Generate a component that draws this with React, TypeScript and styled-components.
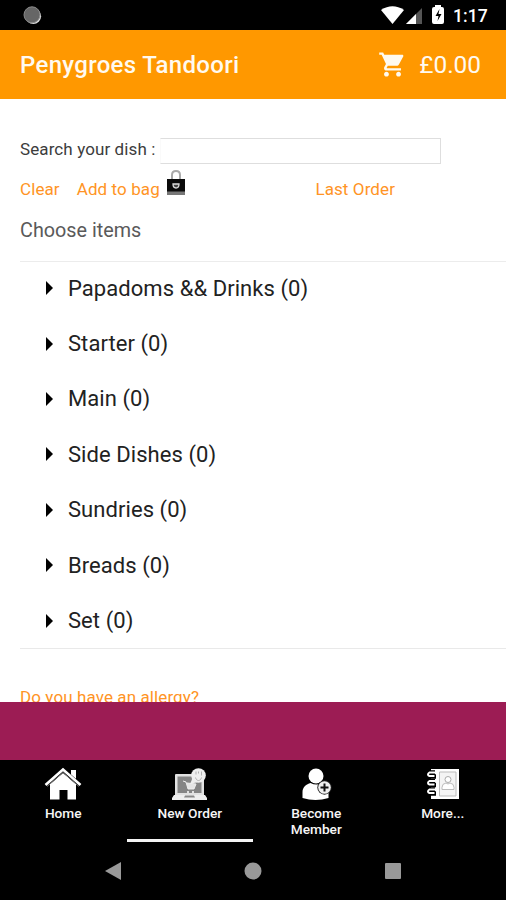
import React from "react";
import styled, { createGlobalStyle } from "styled-components";

const GlobalStyle = createGlobalStyle`
  * { box-sizing: border-box; }
  body { margin: 0; background: #000; font-family: Roboto, sans-serif; }
`;

const Screen = styled.div`
  width: 506px;
  height: 900px;
  display: flex;
  flex-direction: column;
  overflow: hidden;
  background: #fff;
`;

const StatusBar = styled.div`
  height: 30px;
  flex: none;
  display: flex;
  align-items: center;
  padding: 0 18px 0 23px;
  background: #000;
`;

const StatusIcons = styled.div`
  margin-left: auto;
  display: flex;
  align-items: center;
`;

const Clock = styled.span`
  width: 35px;
  margin-left: 8px;
  padding-top: 2px;
  color: #fff;
  font-size: 17.6px;
  font-weight: 500;
  line-height: 20px;
  white-space: nowrap;
`;

const Header = styled.header`
  height: 69px;
  flex: none;
  display: flex;
  align-items: center;
  padding: 0 25px 0 20px;
  background: #ff9800;
  color: #fffaf0;
`;

const Title = styled.h1`
  margin: 0;
  font-size: 24px;
  letter-spacing: 0.32px;
  font-weight: 500;
  white-space: nowrap;
`;

const Basket = styled.div`
  margin-left: auto;
  display: flex;
  align-items: center;
  gap: 12px;
  font-size: 24.4px;
`;

const Content = styled.main`
  height: 603px;
  flex: none;
  overflow: hidden;
  padding: 38px 0 0 20px;
`;

const SearchRow = styled.label`
  display: flex;
  align-items: center;
  height: 27px;
  gap: 4px;
  color: #3c3c3c;
  font-size: 17px;
  letter-spacing: 0.1px;
  white-space: nowrap;
`;

const SearchLabel = styled.span`
  width: 136px;
  padding-bottom: 3px;
`;

const SearchInput = styled.input`
  width: 281px;
  height: 26px;
  padding: 0 4px;
  border: 1px solid #dedede;
  border-left-color: #fafafa;
  background: #fff;
  outline: none;
`;

const Actions = styled.div`
  display: flex;
  align-items: center;
  height: 50px;
`;

const Link = styled.a<{ $gap?: number }>`
  margin-left: ${(p) => p.$gap ?? 0}px;
  color: #ff9425;
  font-size: 17px;
  letter-spacing: 0.1px;
  line-height: 20px;
  white-space: nowrap;
`;

const BagSlot = styled.span`
  width: 20px;
  height: 38px;
  margin-left: 6.5px;
`;

const SectionTitle = styled.h2`
  margin: 0;
  height: 47px;
  padding-top: 5px;
  color: #5a5a5a;
  font-size: 19.8px;
  font-weight: 400;
  line-height: 24px;
`;

const Categories = styled.ul`
  margin: 0;
  padding: 0;
  height: 388px;
  border-top: 1px solid #ececec;
  border-bottom: 1px solid #e9e9e9;
  list-style: none;
`;

const Category = styled.li`
  height: 55.4px;
  display: flex;
  align-items: center;
  gap: 15px;
  padding: 0 0 3px 26px;
  color: #222;
  font-size: 22px;
  letter-spacing: 0.06px;
  white-space: nowrap;
`;

const Allergy = styled.div`
  padding-top: 38px;
`;

const Banner = styled.div`
  height: 58px;
  flex: none;
  background: #9c1c54;
`;

const Tabs = styled.nav`
  height: 82px;
  flex: none;
  display: grid;
  grid-template-columns: repeat(4, 126.5px);
  background: #000;
`;

const Tab = styled.div<{ $active?: boolean }>`
  display: flex;
  flex-direction: column;
  align-items: center;
  padding-top: 5px;
  border-bottom: 3px solid ${(p) => (p.$active ? "#f4f4f4" : "#000")};
  color: #f6f6f6;
  font-size: 13.7px;
  font-weight: 500;
  line-height: 16px;
  text-align: center;
  white-space: pre-line;
`;

const SystemNav = styled.div`
  height: 58px;
  flex: none;
  display: flex;
  justify-content: space-between;
  align-items: center;
  padding: 0 105px 0 105px;
  background: #000;
`;

const categories = ["Papadoms && Drinks", "Starter", "Main", "Side Dishes", "Sundries", "Breads", "Set"];

const HomeIcon = () => (
  <svg width="40" height="40" viewBox="0 0 40 40">
    <path d="M7 19 20 8l13 11v15.500H24.500V24.500h-8v10H7z" fill="#fff" />
    <path d="M28 5h5v10l-5-4z" fill="#fff" />
    <path d="M2 21 20 5l18 16" fill="none" stroke="#000" strokeWidth="4" />
    <path d="M2.500 20 20 4.500 37.500 20" fill="none" stroke="#fff" strokeWidth="2.600" />
    <path d="M7 20.500 20 9l13 11.500V25H7z" fill="#fff" />
    <path d="M4 21.500 20 7.500l16 14" fill="none" stroke="#777" strokeWidth="1" />
  </svg>
);

const OrderIcon = () => (
  <svg width="40" height="40" viewBox="0 0 40 40">
    <rect x="5" y="9" width="29" height="22" rx="1" fill="#e2e2e2" />
    <rect x="7.5" y="11.5" width="24" height="16.5" fill="#858585" />
    <path d="M4 30h31l2 3v2H2v-2z" fill="#eee" />
    <path d="M15 30.500h9l1 2H14z" fill="#888" />
    <path d="m13 16 3 1 2 7h6l2-5-9-1" fill="#e5e5e5" stroke="#eee" />
    <circle cx="18" cy="27" r="1" fill="#fff" />
    <circle cx="23" cy="27" r="1" fill="#fff" />
    <path d="M20 19 23 12l5 5z" fill="#eee" />
    <circle cx="28.5" cy="10.5" r="7.3" fill="#eee" />
    <path d="M26 6.500v3m2.500-3v2m3-2v4m-6 2c1 4 5 4 6 0" fill="none" stroke="#b0b0b0" />
  </svg>
);

const MemberIcon = () => (
  <svg width="40" height="40" viewBox="0 0 40 40">
    <circle cx="20" cy="11" r="7.5" fill="#fff" />
    <path d="M6.500 33V27c0-5 4-8 8-9q6 3 12 0c4 1 6 4 6 9v6q-13 4-26 0" fill="#fff" />
    <circle cx="28.500" cy="22.500" r="7.200" fill="#222" />
    <circle cx="28.500" cy="22.500" r="6.300" fill="#f0f0f0" />
    <path d="M24.500 22.500h8m-4-4v8" stroke="#111" strokeWidth="2" />
  </svg>
);

const MoreIcon = () => (
  <svg width="40" height="40" viewBox="0 0 40 40">
    <path d="M8 4h28v30H8z" fill="#fff" />
    <path d="M16.500 7h16.500v24H16.500z" fill="#f4f4f4" stroke="#bbb" />
    <circle cx="25" cy="14.500" r="3" fill="#fff" stroke="#aaa" />
    <path d="M19 24.500v-2q0-4 4-4.500 2 2 4 0 4 .5 4 4.500v2z" fill="#fff" stroke="#bbb" />
    {[9.5, 18, 26.5].map((y) => (
      <g key={y}>
        <path d={`M12 ${y - 2}H6q-3 2 0 4h7`} fill="none" stroke="#000" strokeWidth="4.5" />
        <path d={`M12 ${y - 2}H6.500q-3 2 0 3.500h5`} fill="none" stroke="#fff" strokeWidth="2" />
      </g>
    ))}
  </svg>
);

const tabs = [
  { label: "Home", Icon: HomeIcon },
  { label: "New Order", Icon: OrderIcon, active: true },
  { label: "Become\nMember", Icon: MemberIcon },
  { label: "More...", Icon: MoreIcon },
];

export default function App() {
  return (
    <Screen>
      <GlobalStyle />
      <StatusBar>
        <svg width="19" height="19" viewBox="0 0 19 19">
          <circle cx="10.3" cy="10.3" r="7.8" fill="#ddd" />
          <circle cx="9" cy="8.8" r="8" fill="#666" stroke="#8b8b8b" />
        </svg>
        <StatusIcons>
          <svg width="64" height="22" viewBox="0 0 64 22">
            <path d="M0 6Q11.500-1.500 23 6L11.500 20z" fill="#fff" />
            <path d="M25 20 41 4v16z" fill="#555" />
            <path d="M25 20 35 10v10z" fill="#fff" />
            <path d="M54 3V1h6v2h1q2 0 2 2v13q0 2-2 2h-8q-2 0-2-2V5q0-2 2-2z" fill="#fff" />
            <path d="m58.500 5-4 7h3l-1 5 4-7h-3z" fill="#000" />
          </svg>
          <Clock>1:17</Clock>
        </StatusIcons>
      </StatusBar>
      <Header>
        <Title>Penygroes Tandoori</Title>
        <Basket>
          <svg width="29" height="29" viewBox="0 0 24 24" fill="currentColor">
            <path d="M7 18c-1.100 0-1.990.9-1.990 2S5.900 22 7 22s2-.9 2-2-.9-2-2-2zM1 2v2h2l3.600 7.590-1.350 2.450c-.16.28-.25.61-.25.96 0 1.100.9 2 2 2h12v-2H7.420c-.14 0-.25-.11-.25-.25l.03-.12.900-1.630h7.450c.75 0 1.410-.41 1.750-1.030l3.580-6.490c.08-.14.12-.31.12-.48 0-.55-.45-1-1-1H5.210l-.94-2H1zm16 16c-1.100 0-1.990.9-1.990 2s.89 2 1.990 2 2-.9 2-2-.9-2-2-2z" />
          </svg>
          <span>£0.00</span>
        </Basket>
      </Header>
      <Content>
        <SearchRow>
          <SearchLabel>Search your dish :</SearchLabel>
          <SearchInput />
        </SearchRow>
        <Actions>
          <Link>Clear</Link>
          <Link $gap={17}>Add to bag</Link>
          <BagSlot>
            <svg width="20" height="28" viewBox="0 0 20 28">
              <path d="M6 12V5q0-4 4-4t4 4v7" fill="none" stroke="#aaa" strokeWidth="2" />
              <path d="M1 9h18v16H1z" fill="#0b0b0b" />
              <path d="M1 21.500h18v3.500H1z" fill="#777" />
              <path d="M7 14h6q0 4-3 4t-3-4z" fill="#444" stroke="#ddd" strokeWidth="1.300" />
            </svg>
          </BagSlot>
          <Link $gap={129}>Last Order</Link>
        </Actions>
        <SectionTitle>Choose items</SectionTitle>
        <Categories>
          {categories.map((name) => (
            <Category key={name}>
              <svg width="7" height="14" viewBox="0 0 7 14">
                <path d="M0 0 7 7 0 14z" fill="#000" />
              </svg>
              {name} (0)
            </Category>
          ))}
        </Categories>
        <Allergy>
          <Link>Do you have an allergy?</Link>
        </Allergy>
      </Content>
      <Banner />
      <Tabs>
        {tabs.map(({ label, Icon, active }) => (
          <Tab key={label} $active={active}>
            <Icon />
            {label}
          </Tab>
        ))}
      </Tabs>
      <SystemNav>
        <svg width="16" height="18" viewBox="0 0 16 18"><path d="M0 9 16 0v18z" fill="#999" /></svg>
        <svg width="18" height="18" viewBox="0 0 18 18"><circle cx="9" cy="9" r="8.5" fill="#999" /></svg>
        <svg width="16" height="16" viewBox="0 0 16 16"><rect width="16" height="16" rx="1" fill="#999" /></svg>
      </SystemNav>
    </Screen>
  );
}
